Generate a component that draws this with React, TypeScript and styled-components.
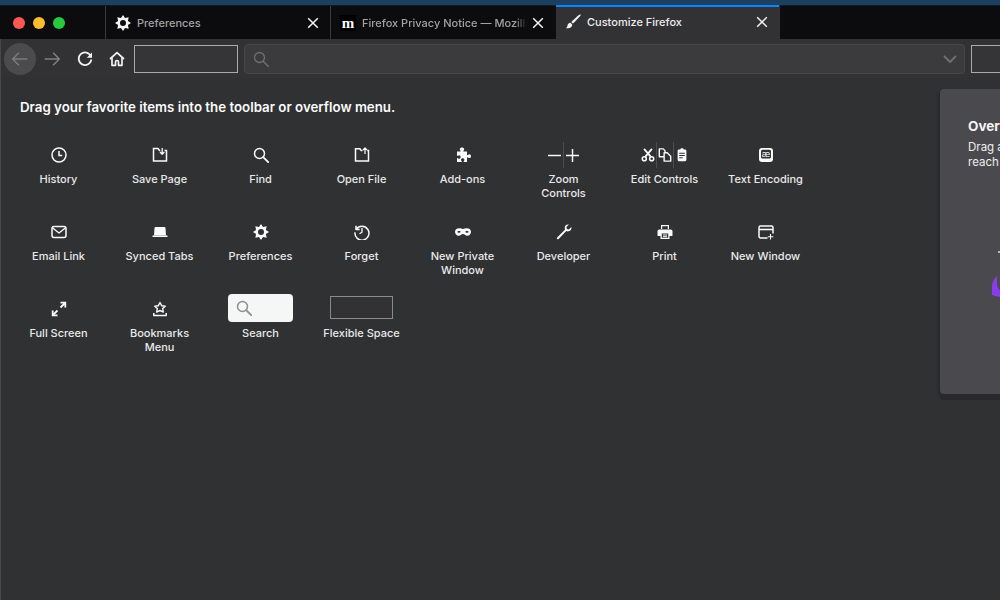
import React from 'react';
import styled, { createGlobalStyle } from 'styled-components';

const GlobalStyle = createGlobalStyle`
  html, body {
    margin: 0;
    padding: 0;
    background: #303133;
    font-family: 'Inter', 'Liberation Sans', sans-serif;
    overflow: hidden;
  }
  * {
    box-sizing: border-box;
  }
`;

const Window = styled.div`
  width: 1000px;
  height: 600px;
  display: flex;
  flex-direction: column;
  overflow: hidden;
  background: #303133;
`;

const DesktopStrip = styled.div`
  height: 6px;
  flex-shrink: 0;
  background: #1d3f60;
  border-bottom: 1px solid #121c26;
`;

const TabBar = styled.div`
  height: 33px;
  flex-shrink: 0;
  display: flex;
  background: #0c0c0e;
`;

const Lights = styled.div`
  width: 106px;
  display: flex;
  align-items: center;
  gap: 8px;
  padding-left: 13px;
  border-right: 1px solid #3a3a3c;
`;

const Light = styled.span<{ $color: string }>`
  width: 12px;
  height: 12px;
  border-radius: 50%;
  background: ${(p) => p.$color};
`;

const Tab = styled.div<{ $active?: boolean; $width: number; $line?: boolean }>`
  width: ${(p) => p.$width}px;
  display: flex;
  align-items: center;
  gap: 6px;
  padding: 0 9px;
  background: ${(p) => (p.$active ? '#323234' : 'transparent')};
  color: ${(p) => (p.$active ? '#ececec' : '#a2a2a4')};
  border-right: 1px solid ${(p) => (p.$line ? '#3a3a3c' : 'transparent')};
  box-shadow: ${(p) => (p.$active ? 'inset 0 2px 0 #0a84ff' : 'none')};
  margin-top: ${(p) => (p.$active ? '-1px' : '0')};
`;

const TabIcon = styled.span`
  flex-shrink: 0;
  color: #f4f4f4;
`;

const TabTitle = styled.span<{ $fade?: boolean }>`
  flex: 1;
  min-width: 0;
  font-size: 11px;
  font-weight: 500;
  white-space: nowrap;
  overflow: hidden;
  ${(p) => p.$fade && `
    margin-right: -3px;
    -webkit-mask-image: linear-gradient(to left, transparent 0, #000 12px);
    mask-image: linear-gradient(to left, transparent 0, #000 12px);
  `}
`;

const Favicon = styled.span`
  width: 16px;
  height: 16px;
  flex-shrink: 0;
  background: #000;
  color: #fff;
  display: flex;
  align-items: center;
  justify-content: center;
  font-family: 'Liberation Serif', serif;
  font-weight: 700;
  font-size: 15px;
  line-height: 14px;
`;

const Toolbar = styled.div`
  height: 39px;
  flex-shrink: 0;
  display: flex;
  align-items: center;
  background: #323234;
  padding: 0 0 0 4px;
  box-shadow: inset 1px 0 0 #48484a;
`;

const NavButton = styled.div<{ $hover?: boolean; $color?: string; $left?: number }>`
  width: 32px;
  height: 32px;
  flex-shrink: 0;
  margin-left: ${(p) => p.$left || 0}px;
  border-radius: 50%;
  display: flex;
  align-items: center;
  justify-content: center;
  background: ${(p) => (p.$hover ? '#4b4b4e' : 'transparent')};
  color: ${(p) => p.$color || '#f2f2f2'};
`;

const SpaceBox = styled.div<{ $width: number }>`
  width: ${(p) => p.$width}px;
  height: 28px;
  flex-shrink: 0;
  margin-left: 1px;
  border: 1px solid #aaaaab;
  background: #353537;
`;

const UrlBar = styled.div`
  width: 721px;
  height: 30px;
  flex-shrink: 0;
  margin: 0 5px 0 6px;
  border: 1px solid #474749;
  border-radius: 4px;
  background: #3b3b3d;
  display: flex;
  align-items: center;
  justify-content: space-between;
  padding: 0 6px 0 8px;
  color: #6f6f71;
`;

const Body = styled.div`
  flex: 1;
  min-height: 0;
  display: flex;
  align-items: flex-start;
`;

const Palette = styled.div`
  width: 940px;
  flex-shrink: 0;
  align-self: stretch;
  padding: 21px 0 0 8px;
  box-shadow: inset 1px 0 0 #48484a;
`;

const Heading = styled.div`
  margin-left: 12px;
  height: 16px;
  font-size: 13.3px;
  line-height: 16px;
  font-weight: 600;
  color: #fbfbfb;
`;

const Grid = styled.div`
  margin-top: 23px;
  display: grid;
  grid-template-columns: repeat(8, 101px);
  grid-auto-rows: 77px;
`;

const Item = styled.div`
  display: flex;
  flex-direction: column;
  align-items: center;
`;

const IconArea = styled.div`
  height: 34px;
  flex-shrink: 0;
  display: flex;
  align-items: center;
  justify-content: center;
  color: #fafafa;
`;

const Label = styled.div`
  font-size: 11px;
  line-height: 14px;
  font-weight: 500;
  text-align: center;
  color: #e9e9e9;
  width: 90px;
  white-space: pre-line;
`;

const Divider = styled.span`
  width: 1px;
  height: 26px;
  background: #4c4c4e;
  flex-shrink: 0;
`;

const Split = styled.div<{ $gap: number }>`
  display: flex;
  align-items: center;
  gap: ${(p) => p.$gap}px;
`;

const SearchWidget = styled.div`
  width: 65px;
  height: 28px;
  margin-top: -2px;
  border-radius: 4px;
  background: #f5f6f6;
  color: #8f8f91;
  display: flex;
  align-items: center;
  padding-left: 8px;
`;

const FlexWidget = styled.div`
  width: 63px;
  height: 23px;
  margin-top: -3px;
  border: 1px solid #8a8a8c;
  background: #323234;
`;

const OverflowPanel = styled.div`
  width: 300px;
  height: 305px;
  flex-shrink: 0;
  margin-top: 11px;
  padding: 29px 28px 0;
  border-radius: 4px 0 0 4px;
  background: #4a4a4e;
  box-shadow: 0 6px 0 #29292b, -2px 2px 3px rgba(0, 0, 0, 0.18);
  color: #f4f4f4;
`;

const PanelTitle = styled.div`
  font-size: 13.5px;
  line-height: 16px;
  font-weight: 700;
  white-space: nowrap;
`;

const PanelText = styled.div`
  margin-top: 6px;
  font-size: 11.5px;
  line-height: 15px;
  width: 250px;
  color: #ededed;
`;

const Art = styled.svg`
  display: block;
  margin-top: 80px;
`;

const Svg = styled.svg`
  display: block;
  flex-shrink: 0;
  fill: none;
  stroke: currentColor;
  stroke-width: 1.5;
  stroke-linecap: round;
  stroke-linejoin: round;
`;

const Icon = ({ children, size = 16 }: { children: React.ReactNode; size?: number }) => (
  <Svg width={size} height={size} viewBox="0 0 16 16">
    {children}
  </Svg>
);

const solid = { fill: 'currentColor', stroke: 'none' } as const;

// eight pointed star with a round hole
const gearPath = (() => {
  const points: string[] = [];
  for (let i = 0; i < 16; i++) {
    const r = i % 2 === 0 ? 8 : 5.3;
    const a = (i * Math.PI) / 8 - Math.PI / 2;
    points.push(`${(8 + r * Math.cos(a)).toFixed(2)} ${(8 + r * Math.sin(a)).toFixed(2)}`);
  }
  return `M${points.join('L')}ZM8 5a3 3 0 1 0 0 6a3 3 0 1 0 0-6Z`;
})();

const gear = (
  <Icon>
    <path {...solid} fillRule="evenodd" d={gearPath} />
  </Icon>
);

const close = (
  <Icon>
    <path d="M3.200 3.200l9.600 9.600M12.800 3.200l-9.600 9.600" strokeWidth="1.500" strokeLinecap="butt" />
  </Icon>
);

const brush = (
  <Icon>
    <path {...solid} d="M15.600.6c.3.3 0 1-.6 1.600C13 4.400 10 7.600 7.900 9.600L6.300 8.100C8.400 6 11.700 3 13.900 1.100 14.500.5 15.300.3 15.600.6z" />
    <path {...solid} d="M5.500 8.800l1.700 1.600c.2 2.200-1.900 4.200-6.500 3.800 1.400-.7 1.500-1.600 1.800-2.800.3-1.500 1.500-2.500 3-2.600z" />
  </Icon>
);

const magnifier = (
  <Icon>
    <circle cx="6.500" cy="6.500" r="5" />
    <path d="M10.200 10.200l5 5" strokeWidth="1.800" />
  </Icon>
);

const icons: Record<string, React.ReactNode> = {
  history: (
    <Icon>
      <circle cx="8" cy="8" r="7" />
      <path d="M8 4v4.500h3.200" strokeLinecap="butt" strokeLinejoin="miter" />
    </Icon>
  ),
  save: (
    <Icon>
      <path d="M8.200 3.500H7.500L6 1.500H1.500V14h13V3.500h-2" strokeLinecap="butt" strokeLinejoin="miter" />
      <path d="M10.200 1v6M8 5l2.200 2.200L12.400 5" strokeWidth="1.300" strokeLinecap="butt" />
    </Icon>
  ),
  find: magnifier,
  open: (
    <Icon>
      <path d="M8.500 3.500H7.200L5.800 1.800H1.500V14h13V3.500h-1.300" strokeLinecap="butt" strokeLinejoin="miter" />
      <path d="M11 7V1M9 3l2-2 2 2" strokeWidth="1.200" strokeLinecap="butt" />
    </Icon>
  ),
  addons: (
    <Icon>
      <path {...solid} d="M2 4.500h3.200c.5 0 .6-.4.3-.8C5 3.100 4.800 2.600 4.800 2.200 4.800 1 6 .4 7 .4s2.200.6 2.200 1.800c0 .4-.2.900-.7 1.500-.3.400-.2.800.3.800H12v3.200c0 .5.400.6.800.3.600-.5 1.100-.7 1.500-.7 1.100 0 1.700 1 1.700 1.900s-.6 1.900-1.700 1.900c-.4 0-.9-.2-1.500-.7-.4-.3-.8-.2-.8.300V15H9c-.5 0-.6-.4-.3-.8.5-.6.700-1.100.700-1.500 0-1-.9-1.500-1.700-1.500s-1.700.5-1.700 1.500c0 .4.200.9.700 1.500.3.400.2.800-.3.800H2v-3.500c0-.5.400-.6.800-.3.500.4.900.6 1.300.6 1 0 1.500-.9 1.500-1.800S5.100 8.200 4.100 8.200c-.4 0-.8.200-1.300.6-.4.3-.8.200-.8-.3z" />
    </Icon>
  ),
  mail: (
    <Icon>
      <rect x="1" y="2.500" width="14" height="11" rx="2" />
      <path d="M2 4.300l6 4.700 6-4.700" strokeWidth="1.300" />
    </Icon>
  ),
  synced: (
    <Icon>
      <path {...solid} d="M3.500 3h9a1 1 0 0 1 1 1l.5 7.500H2L2.500 4a1 1 0 0 1 1-1z" />
      <path {...solid} d="M.5 11.500h15V13H.5z" />
    </Icon>
  ),
  gear,
  forget: (
    <Icon>
      <path d="M2 1.800v3.700h3.700" strokeLinecap="butt" />
      <path d="M2.200 5.200A7 7 0 1 1 1 8.300" strokeLinecap="butt" />
      <path d="M8 4v4.300l-2.500 1.500" strokeLinecap="butt" strokeWidth="1.300" />
    </Icon>
  ),
  mask: (
    <Icon>
      <path {...solid} fillRule="evenodd" d="M4.300 4.200c1.300 0 2.300.7 3.700.7s2.400-.7 3.700-.7c2.300 0 4.300 1 4.300 3.500 0 2.300-1.500 4-3.700 4-2 0-2.800-1.700-4.300-1.700s-2.300 1.700-4.300 1.700C1.500 11.700 0 10 0 7.700 0 5.200 2 4.200 4.300 4.200zM4.200 7c-.9 0-1.800.2-1.800.8 0 .6.700 1 1.500 1 .8 0 1.700-.4 1.700-1 0-.5-.6-.8-1.400-.8zm7.600 0c-.8 0-1.400.3-1.400.8 0 .6.900 1 1.700 1 .8 0 1.500-.4 1.500-1 0-.6-.9-.8-1.800-.8z" />
    </Icon>
  ),
  developer: (
    <Icon>
      <path {...solid} d="M15.400 3.100l-2.500 2.500-2-.5-.5-2L12.900.6C10.900.1 8.900 1.300 8.700 3.400c-.1.800.1 1.600.4 2.200L1.200 13.500c-.5.500-.5 1.100-.1 1.500.4.400 1 .4 1.500-.1l7.700-7.900c.7.300 1.500.5 2.300.3 2.200-.4 3.200-2.200 2.800-4.200z" />
    </Icon>
  ),
  print: (
    <Icon>
      <path {...solid} fillRule="evenodd" d="M4 1h8v4H4zM5.200 2.200v2.800h5.600V2.200z" />
      <path {...solid} fillRule="evenodd" d="M2.200 5.500h11.600c.9 0 1.700.8 1.700 1.700v4.300c0 .3-.2.500-.5.500H12.500v3H3.500v-3H1c-.3 0-.5-.2-.5-.5V7.200c0-.9.800-1.700 1.700-1.700zM4.800 9.500v4.300h6.400V9.500z" />
      <path d="M6 11h4M6 12.700h4" strokeWidth="1" strokeLinecap="butt" />
    </Icon>
  ),
  newwin: (
    <Icon>
      <path d="M9 14H2.500A1.500 1.500 0 0 1 1 12.500v-9A1.500 1.500 0 0 1 2.500 2h11A1.500 1.500 0 0 1 15 3.500V9" />
      <path d="M1 5.500h14" strokeWidth="1.600" strokeLinecap="butt" />
      <path d="M12.500 10v5.500M9.800 12.700h5.500" strokeWidth="1.100" strokeLinecap="butt" />
    </Icon>
  ),
  fullscreen: (
    <Icon>
      <path d="M9.500 6.500L14 2M1.800 14.200L6.500 9.500" strokeWidth="1.800" strokeLinecap="butt" />
      <path d="M9.500 1.700h4.800v4.800M1.700 9.500v4.800h4.800" strokeWidth="1.800" strokeLinecap="butt" strokeLinejoin="miter" />
    </Icon>
  ),
  bookmarks: (
    <Icon>
      <path d="M8 1.500l1.700 3.200 3.500.5-2.500 2.400.6 3.500L8 9.500l-3.300 1.600.6-3.500-2.500-2.400 3.500-.5z" strokeWidth="1.400" />
      <path d="M1.800 12v2.400h12.400V12" strokeWidth="1.500" strokeLinecap="butt" />
    </Icon>
  ),
  encoding: (
    <Icon>
      <rect {...solid} x="1" y="1" width="14" height="14" rx="3" />
      <rect x="3" y="2.800" width="10" height="8.600" rx="1.500" fill="#303133" stroke="none" />
      <text x="8" y="10" textAnchor="middle" fontSize="9.500" fontFamily="'Liberation Sans', sans-serif" fill="#fafafa" stroke="none">æ</text>
    </Icon>
  ),
};

const zoomIcon = (
  <Split $gap={2}>
    <Icon size={13}>
      <path d="M0 8h16" strokeWidth="1.800" strokeLinecap="butt" />
    </Icon>
    <Divider />
    <Icon size={13}>
      <path d="M0 8h16M8 0v16" strokeWidth="1.800" strokeLinecap="butt" />
    </Icon>
  </Split>
);

const editIcon = (
  <Split $gap={1}>
    <Icon size={14}>
      <path d="M3.500 1l8 9.500M12.500 1l-8 9.500" strokeWidth="2" strokeLinecap="butt" />
      <circle cx="3.800" cy="12.200" r="2.300" strokeWidth="1.800" />
      <circle cx="12.200" cy="12.200" r="2.300" strokeWidth="1.800" />
    </Icon>
    <Divider />
    <Icon size={14}>
      <path d="M1.500 1h4.500l2 2v7H1.500z" strokeWidth="1.600" />
      <path d="M7 5.500h3.500l4 4V15H7z" strokeWidth="1.600" fill="#303133" />
    </Icon>
    <Divider />
    <Icon size={14}>
      <path {...solid} fillRule="evenodd" d="M6 1.800C6 1 7 .4 8 .4s2 .6 2 1.400h1.500c.9 0 1.500.7 1.500 1.500v10.200c0 .9-.6 1.500-1.500 1.500h-7c-.9 0-1.500-.6-1.500-1.500V3.300c0-.8.600-1.500 1.500-1.500zM4.800 5.500v1.100h6.400V5.500zm0 2.500v1.100h6.400V8zm0 2.500v1.100h4V10.500z" />
    </Icon>
  </Split>
);

type PaletteItem = { label: string; icon?: string; custom?: React.ReactNode };

const items: PaletteItem[] = [
  { label: 'History', icon: 'history' },
  { label: 'Save Page', icon: 'save' },
  { label: 'Find', icon: 'find' },
  { label: 'Open File', icon: 'open' },
  { label: 'Add-ons', icon: 'addons' },
  { label: 'Zoom\nControls', custom: zoomIcon },
  { label: 'Edit Controls', custom: editIcon },
  { label: 'Text Encoding', icon: 'encoding' },
  { label: 'Email Link', icon: 'mail' },
  { label: 'Synced Tabs', icon: 'synced' },
  { label: 'Preferences', icon: 'gear' },
  { label: 'Forget', icon: 'forget' },
  { label: 'New Private\nWindow', icon: 'mask' },
  { label: 'Developer', icon: 'developer' },
  { label: 'Print', icon: 'print' },
  { label: 'New Window', icon: 'newwin' },
  { label: 'Full Screen', icon: 'fullscreen' },
  { label: 'Bookmarks\nMenu', icon: 'bookmarks' },
  { label: 'Search', custom: <SearchWidget>{magnifier}</SearchWidget> },
  { label: 'Flexible Space', custom: <FlexWidget /> },
];

const App: React.FC = () => (
  <Window>
    <GlobalStyle />
    <DesktopStrip />
    <TabBar>
      <Lights>
        <Light $color="#fc5753" />
        <Light $color="#fdbc2e" />
        <Light $color="#28c83f" />
      </Lights>
      <Tab $width={225} $line>
        <TabIcon>{gear}</TabIcon>
        <TabTitle>Preferences</TabTitle>
        <TabIcon>{close}</TabIcon>
      </Tab>
      <Tab $width={225}>
        <Favicon>m</Favicon>
        <TabTitle $fade>Firefox Privacy Notice — Mozilla</TabTitle>
        <TabIcon>{close}</TabIcon>
      </Tab>
      <Tab $width={224} $active>
        <TabIcon>{brush}</TabIcon>
        <TabTitle>Customize Firefox</TabTitle>
        <TabIcon>{close}</TabIcon>
      </Tab>
    </TabBar>
    <Toolbar>
      <NavButton $hover $color="#7c7c7f">
        <Icon size={18}>
          <path d="M14.500 8h-13M7 2.500L1.500 8 7 13.500" strokeWidth="1.300" strokeLinecap="butt" />
        </Icon>
      </NavButton>
      <NavButton $color="#808082">
        <Icon size={18}>
          <path d="M1.500 8h13M9 2.500L14.500 8 9 13.500" strokeWidth="1.300" strokeLinecap="butt" />
        </Icon>
      </NavButton>
      <NavButton $left={1}>
        <Icon>
          <path d="M13.800 5.200A6.300 6.300 0 1 0 14.300 8.500" strokeWidth="1.800" strokeLinecap="butt" />
          <path {...solid} d="M15 1.500v5.200H9.800z" />
        </Icon>
      </NavButton>
      <NavButton>
        <Icon>
          <path d="M1 8L8 1.700 15 8" strokeWidth="1.700" strokeLinecap="butt" />
          <path d="M3 7v7.300h3.500V11a1.500 1.500 0 0 1 3 0v3.300H13V7" strokeWidth="1.700" strokeLinecap="butt" />
        </Icon>
      </NavButton>
      <SpaceBox $width={104} />
      <UrlBar>
        <Icon>
          <circle cx="6.500" cy="6.500" r="5" strokeWidth="1.300" />
          <path d="M10.200 10.200l5 5" strokeWidth="1.500" />
        </Icon>
        <Icon>
          <path d="M2 5l6 6 6-6" strokeWidth="1.800" strokeLinecap="butt" />
        </Icon>
      </UrlBar>
      <SpaceBox $width={60} />
    </Toolbar>
    <Body>
      <Palette>
        <Heading>Drag your favorite items into the toolbar or overflow menu.</Heading>
        <Grid>
          {items.map((item) => (
            <Item key={item.label}>
              <IconArea>{item.custom || icons[item.icon as string]}</IconArea>
              <Label>{item.label}</Label>
            </Item>
          ))}
        </Grid>
      </Palette>
      <OverflowPanel>
        <PanelTitle>Overflow Menu</PanelTitle>
        <PanelText>Drag and drop items here to keep them within reach but out of your toolbar…</PanelText>
        <Art width="60" height="50" viewBox="0 0 60 50">
          <path d="M29 26c-2 2-5 6-5 10v9c3 1 6 2 10 2v-5c-3-2-5-5-5-8z" fill="#8a3bea" />
          <circle cx="31" cy="2" r="1" fill="#dddddd" />
        </Art>
      </OverflowPanel>
    </Body>
  </Window>
);

export default App;
